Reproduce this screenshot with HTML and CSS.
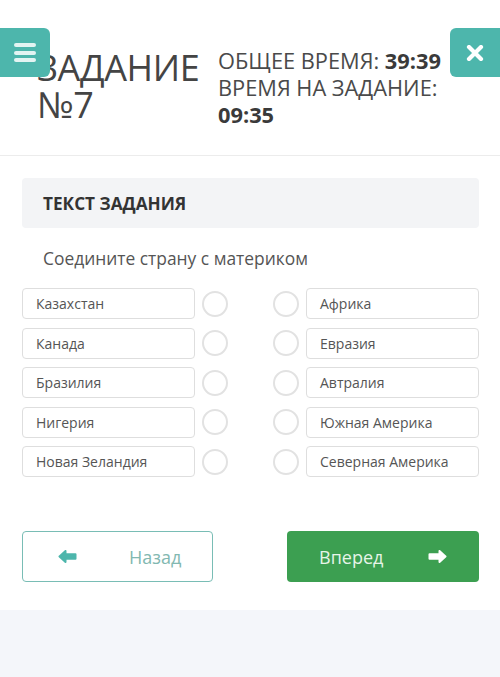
FILE: index.html
```html
<!DOCTYPE html>
<html lang="ru">
<head>
<meta charset="utf-8">
<link rel="stylesheet" href="styles.css">
</head>
<body>
<div class="page">
  <header class="header">
    <button class="menu-btn" aria-label="menu">
      <span></span><span></span><span></span>
    </button>
    <h1 class="title">ЗАДАНИЕ<br>№7</h1>
    <div class="times">
      <div>ОБЩЕЕ ВРЕМЯ: <b>39:39</b></div>
      <div>ВРЕМЯ НА ЗАДАНИЕ:</div>
      <div><b>09:35</b></div>
    </div>
    <button class="close-btn" aria-label="close">
      <svg width="18" height="16" viewBox="0 0 18 16"><path d="M3 2 L15 14 M15 2 L3 14" stroke="#fff" stroke-width="4.2" stroke-linecap="round"/></svg>
    </button>
  </header>
  <main class="body">
    <div class="task-head">ТЕКСТ ЗАДАНИЯ</div>
    <p class="task-text">Соедините страну с материком</p>
    <div class="match">
      <div class="item">Казахстан</div><span class="dot"></span><span></span><span class="dot"></span><div class="item">Африка</div>
      <div class="item">Канада</div><span class="dot"></span><span></span><span class="dot"></span><div class="item">Евразия</div>
      <div class="item">Бразилия</div><span class="dot"></span><span></span><span class="dot"></span><div class="item">Автралия</div>
      <div class="item">Нигерия</div><span class="dot"></span><span></span><span class="dot"></span><div class="item">Южная Америка</div>
      <div class="item">Новая Зеландия</div><span class="dot"></span><span></span><span class="dot"></span><div class="item">Северная Америка</div>
    </div>
    <div class="nav">
      <button class="btn back">
        <svg width="19" height="13" viewBox="0 0 19 13"><path d="M1.5 6.5 L7.5 1 L7.5 4.2 L17.5 4.2 L17.5 8.8 L7.5 8.8 L7.5 12 Z" fill="#4db6ac" stroke="#4db6ac" stroke-width="2" stroke-linejoin="round"/></svg>
        <span>Назад</span>
      </button>
      <button class="btn next">
        <span>Вперед</span>
        <svg width="19" height="13" viewBox="0 0 19 13"><path d="M17.5 6.5 L11.5 1 L11.5 4.2 L1.5 4.2 L1.5 8.8 L11.5 8.8 L11.5 12 Z" fill="#fff" stroke="#fff" stroke-width="2" stroke-linejoin="round"/></svg>
      </button>
    </div>
  </main>
</div>
</body>
</html>
```
FILE: styles.css
```css
* { box-sizing: border-box; }
html, body { margin: 0; padding: 0; }
body {
  background: #f4f6fa;
  font-family: "Open Sans", "Noto Sans", sans-serif;
  color: #444;
}
.page {
  background: #fff;
  height: 610px;
  box-shadow: 0 3px 8px rgba(0,0,0,0.07);
}
.header {
  position: relative;
  height: 156px;
  border-bottom: 1px solid #ececec;
  display: flex;
  align-items: flex-start;
  padding: 49px 0 0 37px;
}
.menu-btn, .close-btn {
  position: absolute;
  top: 28px;
  width: 50px;
  height: 49px;
  border: none;
  background: #4db6ac;
  padding: 0;
  display: flex;
  align-items: center;
  justify-content: center;
}
.menu-btn {
  left: 0;
  border-radius: 0 6px 6px 0;
  flex-direction: column;
  gap: 3.5px;
}
.menu-btn span {
  display: block;
  width: 22px;
  height: 4px;
  border-radius: 2px;
  background: #e3f4f2;
}
.close-btn {
  right: 0;
  border-radius: 6px 0 0 6px;
}
.title {
  margin: 0;
  font-weight: 400;
  font-size: 36px;
  line-height: 37px;
  color: #444;
  width: 181px;
  letter-spacing: -0.4px;
}
.times {
  font-size: 21.8px;
  line-height: 27px;
  margin-top: -2px;
  color: #4a4a4a;
}
.times b { font-weight: 700; color: #3a3a3a; }
.body {
  padding: 22px 21px 0 22px;
}
.task-head {
  background: #f3f4f6;
  border-radius: 4px;
  height: 50px;
  padding: 0 21px;
  display: flex;
  align-items: center;
  font-weight: 700;
  font-size: 17.2px;
  color: #333;
}
.task-text {
  margin: 19px 0 0 21px;
  font-size: 17.4px;
  line-height: 22px;
  color: #555;
}
.match {
  margin-top: 19px;
  display: grid;
  grid-template-columns: 173px 26px 1fr 26px 173px;
  column-gap: 7px;
  row-gap: 8.5px;
  align-items: center;
}
.item {
  height: 31px;
  border: 1px solid #dedede;
  border-radius: 4px;
  padding: 0 13px;
  display: flex;
  align-items: center;
  font-size: 14px;
  color: #555;
}
.dot {
  width: 26px;
  height: 26px;
  border: 2px solid #e2e2e2;
  border-radius: 50%;
}
.nav {
  margin-top: 54px;
  display: flex;
  justify-content: space-between;
}
.btn {
  height: 51px;
  border-radius: 4px;
  display: flex;
  align-items: center;
  font-family: inherit;
  font-size: 18px;
  padding: 0;
}
.back {
  width: 191px;
  background: #fff;
  border: 1.5px solid #79bdb5;
  color: #82b8b1;
  padding-left: 35px;
  gap: 52px;
}
.next {
  width: 192px;
  background: #3c9f51;
  border: none;
  color: #e6f4e8;
  padding-left: 32px;
  gap: 45px;
}
```
